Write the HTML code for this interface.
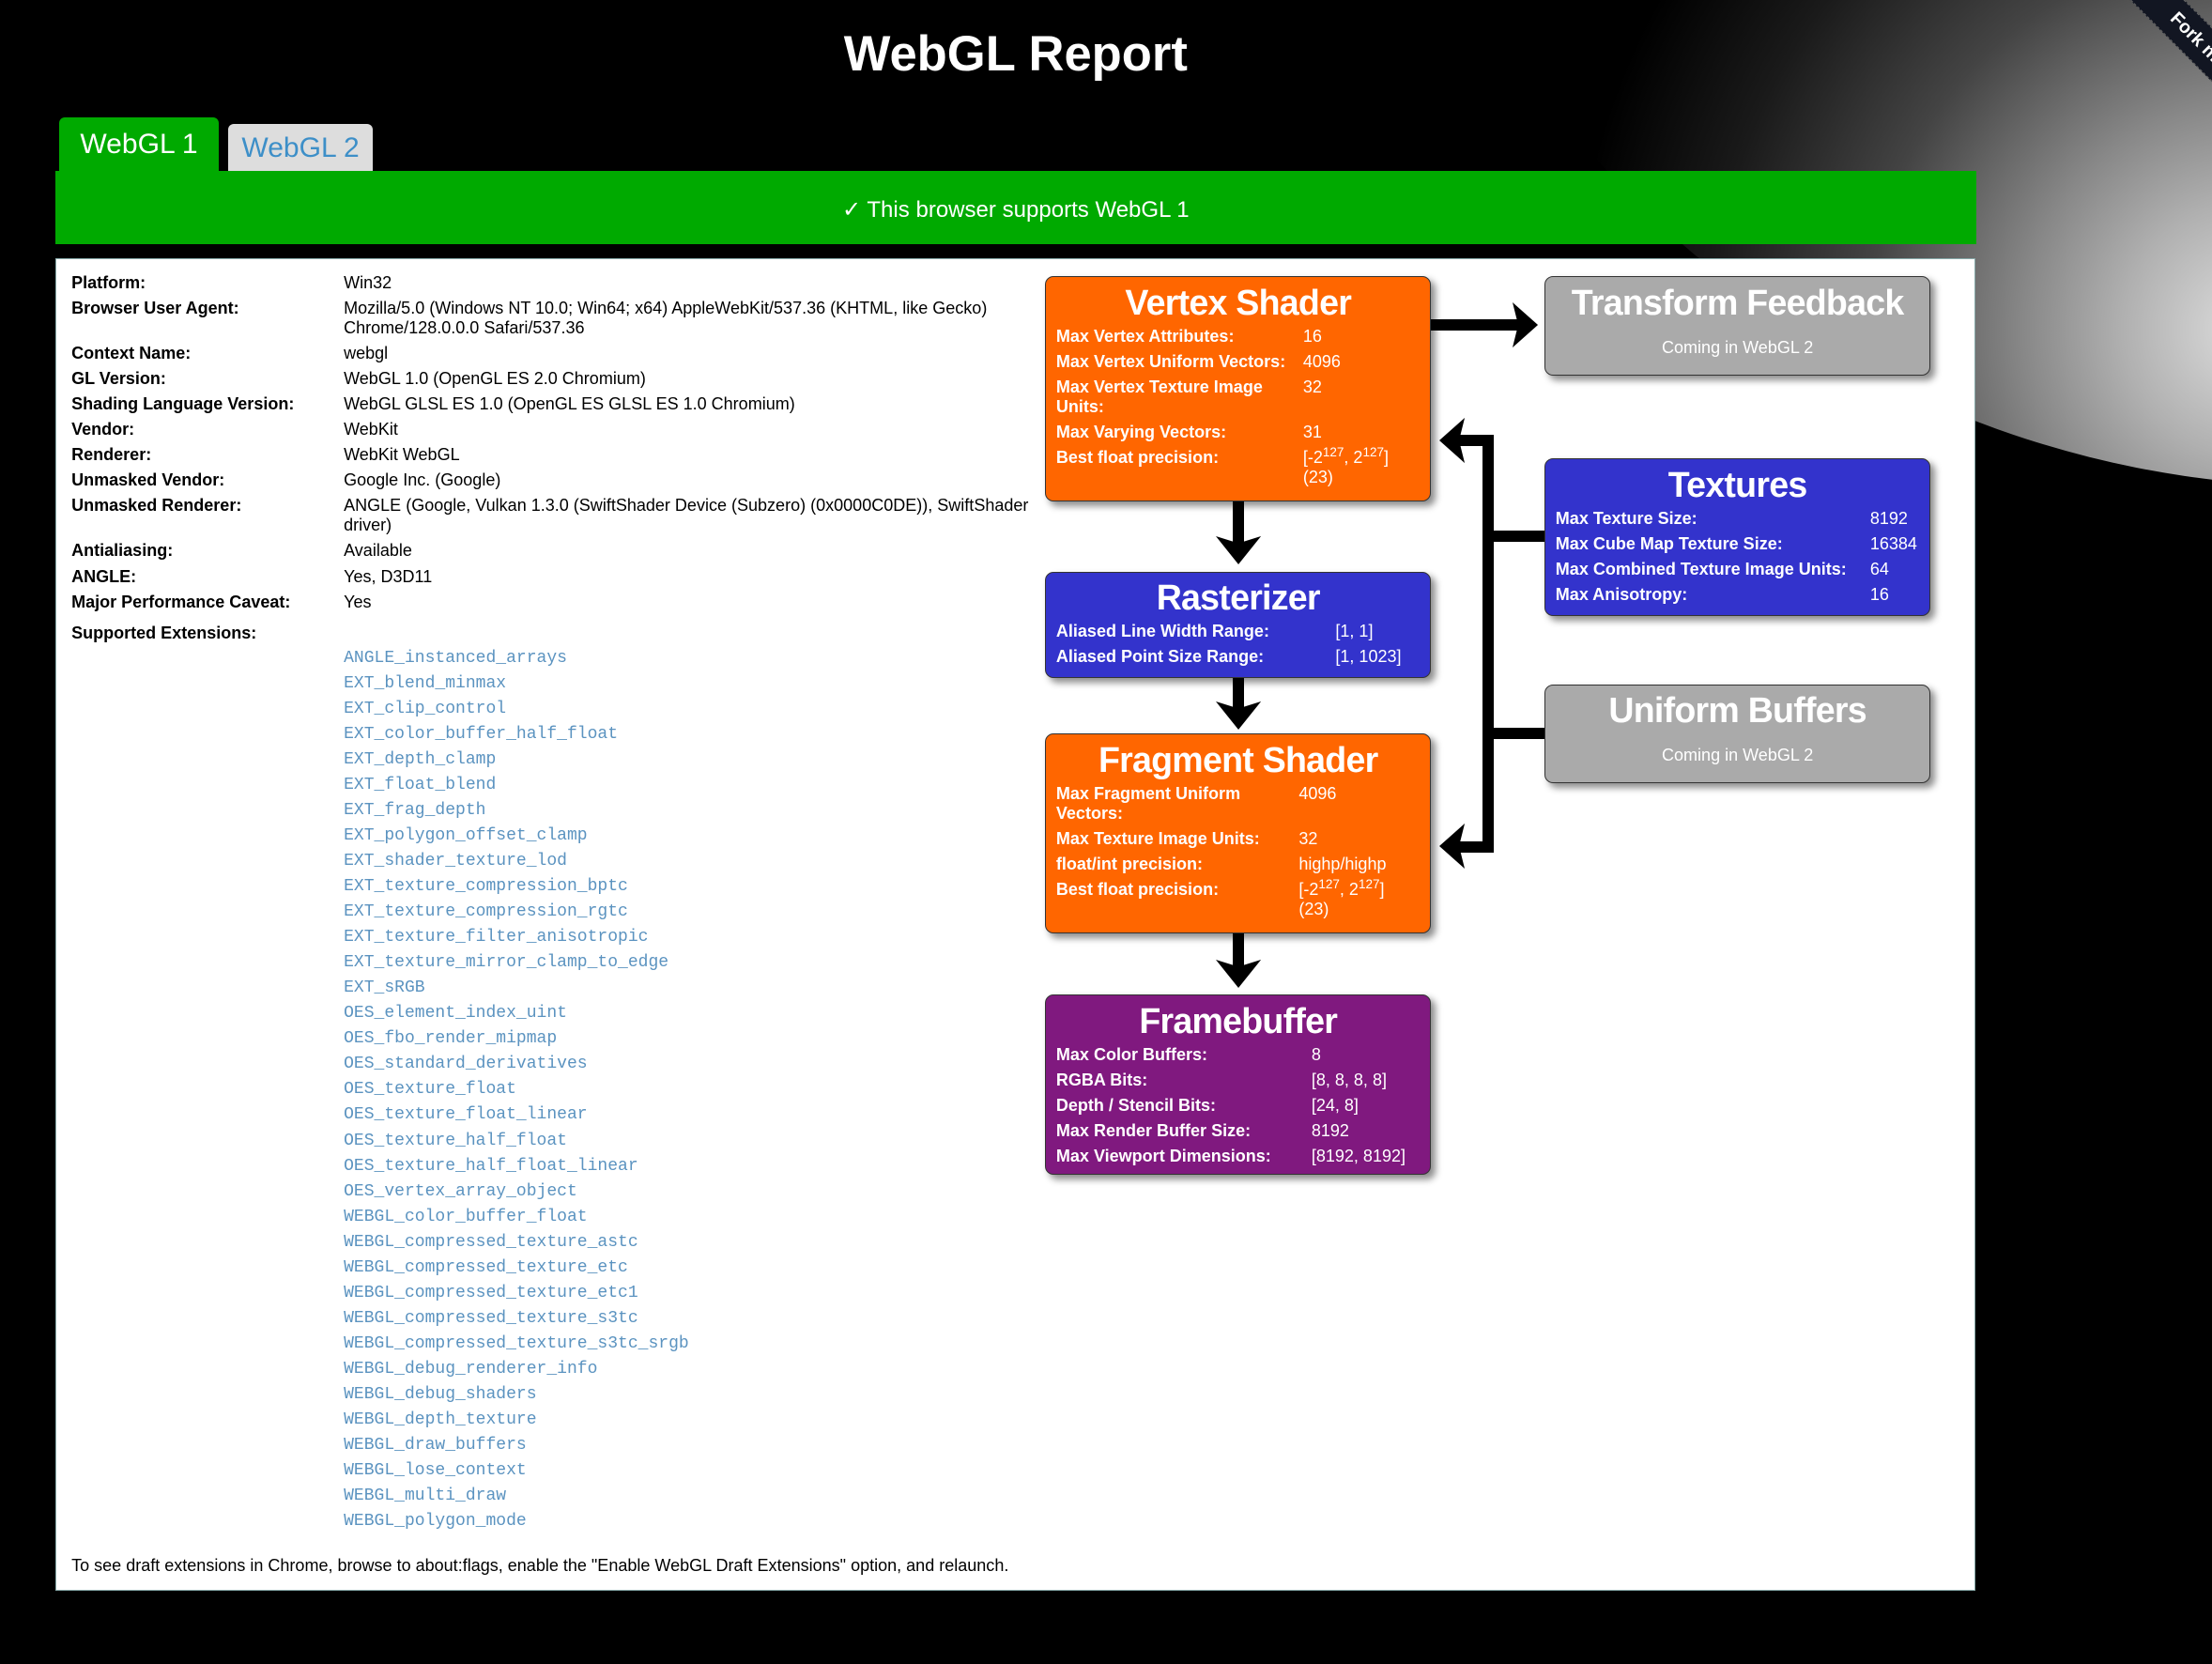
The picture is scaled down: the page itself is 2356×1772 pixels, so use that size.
<!DOCTYPE html>
<html><head><meta charset="utf-8"><style>
html,body{margin:0;padding:0;background:#000;overflow:hidden}
#root{position:relative;width:1568px;height:1179px;zoom:1.50255;font-family:"Liberation Sans",Arial,sans-serif;background:#000;overflow:hidden}
.a{position:absolute}
h1{position:absolute;left:0;width:1440px;top:18px;margin:0;text-align:center;color:#fff;font-size:35px;font-weight:bold}
.panel{position:absolute;left:39px;top:183px;width:1360px;height:943px;background:#fff;border:1px solid #8aa}
.lt{position:absolute;font-size:12px;color:#000;line-height:14px}
.lb{left:11px;font-weight:bold}
.lv{left:204px;width:500px}
.ext{position:absolute;left:204px;font-family:"Liberation Mono",monospace;font-size:12px;color:#5b93c0}
.box{position:absolute;border:1px solid #333;border-radius:6px;box-shadow:3px 3px 5px rgba(0,0,0,.45);color:#fff}
.box .t{text-align:center;font-size:25px;font-weight:bold;margin-top:3px;line-height:30px;letter-spacing:-0.5px}
.box .r{position:absolute;left:7px;font-size:12px;font-weight:bold;line-height:14px}
.box .v{position:absolute;font-size:12px;line-height:14px}
.or{background:#ff6600}.bl{background:#3333cc}.pu{background:#80197f}.gr{background:#aaa}
.cs{text-align:center;font-size:12px;margin-top:10px}
.k{position:absolute;background:#000}
sup{font-size:9px;line-height:0}
</style></head><body><div id="root">
<div class="a" style="left:955px;top:-1045px;width:1390px;height:1390px;border-radius:50%;background:radial-gradient(circle at 46% 92%,#ddd 0px,#b0b0b0 90px,#888 160px,#444 270px,#1a1a1a 380px,#000 480px)"></div>
<div class="a" style="left:1460px;top:17px;width:200px;height:26px;background:#121622;transform:rotate(45deg);color:#fff;font-size:13px;font-weight:bold;line-height:26px;text-indent:72px;white-space:nowrap;border-top:1px dashed #666;border-bottom:1px dashed #666">Fork me on GitHub</div>
<h1>WebGL Report</h1>
<div class="a" style="left:42px;top:83px;width:113px;height:40px;background:#00aa00;border-radius:4px 4px 0 0;color:#fff;font-size:20px;line-height:38px;text-align:center">WebGL 1</div>
<div class="a" style="left:162px;top:88px;width:102px;height:33px;background:#ddd;border-radius:4px 4px 0 0;color:#3d8fc8;font-size:20px;line-height:34px;text-align:center">WebGL 2</div>
<div class="a" style="left:39px;top:121px;width:1362px;height:52px;background:#00aa00;color:#fff;font-size:16px;line-height:56px;text-align:center">✓ This browser supports WebGL 1</div>
<div class="panel">
<div class="lt lb" style="top:10px">Platform:</div><div class="lt lv" style="top:10px">Win32</div>
<div class="lt lb" style="top:28px">Browser User Agent:</div><div class="lt lv" style="top:28px">Mozilla/5.0 (Windows NT 10.0; Win64; x64) AppleWebKit/537.36 (KHTML, like Gecko) Chrome/128.0.0.0 Safari/537.36</div>
<div class="lt lb" style="top:60px">Context Name:</div><div class="lt lv" style="top:60px">webgl</div>
<div class="lt lb" style="top:78px">GL Version:</div><div class="lt lv" style="top:78px">WebGL 1.0 (OpenGL ES 2.0 Chromium)</div>
<div class="lt lb" style="top:96px">Shading Language Version:</div><div class="lt lv" style="top:96px">WebGL GLSL ES 1.0 (OpenGL ES GLSL ES 1.0 Chromium)</div>
<div class="lt lb" style="top:114px">Vendor:</div><div class="lt lv" style="top:114px">WebKit</div>
<div class="lt lb" style="top:132px">Renderer:</div><div class="lt lv" style="top:132px">WebKit WebGL</div>
<div class="lt lb" style="top:150px">Unmasked Vendor:</div><div class="lt lv" style="top:150px">Google Inc. (Google)</div>
<div class="lt lb" style="top:168px">Unmasked Renderer:</div><div class="lt lv" style="top:168px;width:490px">ANGLE (Google, Vulkan 1.3.0 (SwiftShader Device (Subzero) (0x0000C0DE)), SwiftShader driver)</div>
<div class="lt lb" style="top:200px">Antialiasing:</div><div class="lt lv" style="top:200px">Available</div>
<div class="lt lb" style="top:218px">ANGLE:</div><div class="lt lv" style="top:218px">Yes, D3D11</div>
<div class="lt lb" style="top:236px">Major Performance Caveat:</div><div class="lt lv" style="top:236px">Yes</div>
<div class="lt lb" style="top:258px">Supported Extensions:</div>
<div class="ext" style="top:274px;line-height:18px">ANGLE_instanced_arrays<br>EXT_blend_minmax<br>EXT_clip_control<br>EXT_color_buffer_half_float<br>EXT_depth_clamp<br>EXT_float_blend<br>EXT_frag_depth<br>EXT_polygon_offset_clamp<br>EXT_shader_texture_lod<br>EXT_texture_compression_bptc<br>EXT_texture_compression_rgtc<br>EXT_texture_filter_anisotropic<br>EXT_texture_mirror_clamp_to_edge<br>EXT_sRGB<br>OES_element_index_uint<br>OES_fbo_render_mipmap<br>OES_standard_derivatives<br>OES_texture_float<br>OES_texture_float_linear<br>OES_texture_half_float<br>OES_texture_half_float_linear<br>OES_vertex_array_object<br>WEBGL_color_buffer_float<br>WEBGL_compressed_texture_astc<br>WEBGL_compressed_texture_etc<br>WEBGL_compressed_texture_etc1<br>WEBGL_compressed_texture_s3tc<br>WEBGL_compressed_texture_s3tc_srgb<br>WEBGL_debug_renderer_info<br>WEBGL_debug_shaders<br>WEBGL_depth_texture<br>WEBGL_draw_buffers<br>WEBGL_lose_context<br>WEBGL_multi_draw<br>WEBGL_polygon_mode</div>
<div class="lt" style="left:11px;top:919px">To see draft extensions in Chrome, browse to about:flags, enable the "Enable WebGL Draft Extensions" option, and relaunch.</div>
</div>

<div class="k" style="left:1014px;top:226px;width:64px;height:8px"></div>
<svg class="a" style="left:1072px;top:214px" width="20" height="32"><polygon points="0,0 18,16 0,32 4,16" fill="#000"/></svg>
<div class="k" style="left:874px;top:355px;width:8px;height:32px"></div>
<svg class="a" style="left:862px;top:380px" width="32" height="22"><polygon points="0,0 16,20 32,0 16,5" fill="#000"/></svg>
<div class="k" style="left:874px;top:480px;width:8px;height:24px"></div>
<svg class="a" style="left:862px;top:497px" width="32" height="22"><polygon points="0,0 16,20 32,0 16,5" fill="#000"/></svg>
<div class="k" style="left:874px;top:661px;width:8px;height:26px"></div>
<svg class="a" style="left:862px;top:680px" width="32" height="22"><polygon points="0,0 16,20 32,0 16,5" fill="#000"/></svg>
<div class="k" style="left:1051px;top:308px;width:8px;height:296px"></div>
<div class="k" style="left:1034px;top:308px;width:25px;height:8px"></div>
<div class="k" style="left:1034px;top:596px;width:25px;height:8px"></div>
<svg class="a" style="left:1018px;top:296px" width="20" height="32"><polygon points="20,0 2,16 20,32 16,16" fill="#000"/></svg>
<svg class="a" style="left:1018px;top:584px" width="20" height="32"><polygon points="20,0 2,16 20,32 16,16" fill="#000"/></svg>
<div class="k" style="left:1055px;top:376px;width:42px;height:8px"></div>
<div class="k" style="left:1055px;top:516px;width:42px;height:8px"></div>

<div class="box or" style="left:741px;top:196px;width:272px;height:158px">
<div class="t">Vertex Shader</div>
<div class="r" style="top:35px">Max Vertex Attributes:</div><div class="v" style="left:182px;top:35px">16</div>
<div class="r" style="top:53px">Max Vertex Uniform Vectors:</div><div class="v" style="left:182px;top:53px">4096</div>
<div class="r" style="top:71px;width:160px">Max Vertex Texture Image Units:</div><div class="v" style="left:182px;top:71px">32</div>
<div class="r" style="top:103px">Max Varying Vectors:</div><div class="v" style="left:182px;top:103px">31</div>
<div class="r" style="top:121px">Best float precision:</div><div class="v" style="left:182px;top:121px">[-2<sup>127</sup>, 2<sup>127</sup>]<br>(23)</div>
</div>
<div class="box bl" style="left:741px;top:405px;width:272px;height:74px">
<div class="t">Rasterizer</div>
<div class="r" style="top:35px">Aliased Line Width Range:</div><div class="v" style="left:205px;top:35px">[1, 1]</div>
<div class="r" style="top:53px">Aliased Point Size Range:</div><div class="v" style="left:205px;top:53px">[1, 1023]</div>
</div>
<div class="box or" style="left:741px;top:520px;width:272px;height:140px">
<div class="t">Fragment Shader</div>
<div class="r" style="top:35px;width:150px">Max Fragment Uniform Vectors:</div><div class="v" style="left:179px;top:35px">4096</div>
<div class="r" style="top:67px">Max Texture Image Units:</div><div class="v" style="left:179px;top:67px">32</div>
<div class="r" style="top:85px">float/int precision:</div><div class="v" style="left:179px;top:85px">highp/highp</div>
<div class="r" style="top:103px">Best float precision:</div><div class="v" style="left:179px;top:103px">[-2<sup>127</sup>, 2<sup>127</sup>]<br>(23)</div>
</div>
<div class="box pu" style="left:741px;top:705px;width:272px;height:126px">
<div class="t">Framebuffer</div>
<div class="r" style="top:35px">Max Color Buffers:</div><div class="v" style="left:188px;top:35px">8</div>
<div class="r" style="top:53px">RGBA Bits:</div><div class="v" style="left:188px;top:53px">[8, 8, 8, 8]</div>
<div class="r" style="top:71px">Depth / Stencil Bits:</div><div class="v" style="left:188px;top:71px">[24, 8]</div>
<div class="r" style="top:89px">Max Render Buffer Size:</div><div class="v" style="left:188px;top:89px">8192</div>
<div class="r" style="top:107px">Max Viewport Dimensions:</div><div class="v" style="left:188px;top:107px">[8192, 8192]</div>
</div>
<div class="box gr" style="left:1095px;top:196px;width:272px;height:69px">
<div class="t">Transform Feedback</div><div class="cs">Coming in WebGL 2</div>
</div>
<div class="box bl" style="left:1095px;top:325px;width:272px;height:110px">
<div class="t">Textures</div>
<div class="r" style="top:35px">Max Texture Size:</div><div class="v" style="left:230px;top:35px">8192</div>
<div class="r" style="top:53px">Max Cube Map Texture Size:</div><div class="v" style="left:230px;top:53px">16384</div>
<div class="r" style="top:71px">Max Combined Texture Image Units:</div><div class="v" style="left:230px;top:71px">64</div>
<div class="r" style="top:89px">Max Anisotropy:</div><div class="v" style="left:230px;top:89px">16</div>
</div>
<div class="box gr" style="left:1095px;top:485px;width:272px;height:69px">
<div class="t">Uniform Buffers</div><div class="cs">Coming in WebGL 2</div>
</div>
</div></body></html>
